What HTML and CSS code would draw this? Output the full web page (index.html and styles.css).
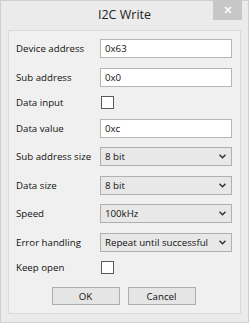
FILE: index.html
```html
<!DOCTYPE html>
<html>
<head>
<meta charset="utf-8">
<link rel="stylesheet" href="styles.css">
</head>
<body>
<div class="window">
  <div class="titlebar">
    <span class="title">I2C Write</span>
    <div class="close"><svg width="8" height="8" viewBox="0 0 8 8"><path d="M1 1L7 7M7 1L1 7" stroke="#fff" stroke-width="1.6"/></svg></div>
  </div>
  <div class="client">
    <div class="form">
      <label class="lbl">Device address</label><div class="field text">0x63</div>
      <label class="lbl">Sub address</label><div class="field text">0x0</div>
      <label class="lbl">Data input</label><div class="check"></div>
      <label class="lbl">Data value</label><div class="field text">0xc</div>
      <label class="lbl">Sub address size</label><div class="field select"><span>8 bit</span><svg class="chev" width="7" height="5" viewBox="0 0 7 5"><path d="M0.5 0.8L3.5 3.8L6.5 0.8" fill="none" stroke="#333" stroke-width="1.5"/></svg></div>
      <label class="lbl">Data size</label><div class="field select"><span>8 bit</span><svg class="chev" width="7" height="5" viewBox="0 0 7 5"><path d="M0.5 0.8L3.5 3.8L6.5 0.8" fill="none" stroke="#333" stroke-width="1.5"/></svg></div>
      <label class="lbl">Speed</label><div class="field select"><span>100kHz</span><svg class="chev" width="7" height="5" viewBox="0 0 7 5"><path d="M0.5 0.8L3.5 3.8L6.5 0.8" fill="none" stroke="#333" stroke-width="1.5"/></svg></div>
      <label class="lbl">Error handling</label><div class="field select"><span>Repeat until successful</span><svg class="chev" width="7" height="5" viewBox="0 0 7 5"><path d="M0.5 0.8L3.5 3.8L6.5 0.8" fill="none" stroke="#333" stroke-width="1.5"/></svg></div>
      <label class="lbl">Keep open</label><div class="check"></div>
    </div>
    <div class="buttons">
      <div class="btn">OK</div>
      <div class="btn">Cancel</div>
    </div>
  </div>
</div>
</body>
</html>
```
FILE: styles.css
```css
html, body {
  margin: 0;
  padding: 0;
  background: #ebebeb;
}
.window {
  width: 249px;
  height: 323px;
  box-sizing: border-box;
  border: 1px solid #cfcfcf;
  background: #ebebeb;
  display: flex;
  flex-direction: column;
  font-family: "Open Sans", "Noto Sans", sans-serif;
  color: #111;
}
.titlebar {
  height: 29px;
  position: relative;
  display: flex;
  justify-content: center;
  align-items: center;
}
.title {
  font-size: 12.5px;
  color: #222;
  margin-top: -2px;
}
.close {
  position: absolute;
  top: -1px;
  right: 6px;
  width: 29px;
  height: 20px;
  background: #c7c7c7;
  display: flex;
  align-items: center;
  justify-content: center;
}
.client {
  margin: 0 7px 8px 7px;
  flex: 1;
  border: 1px solid #dadada;
  background: #f0f0f0;
  display: flex;
  flex-direction: column;
  padding: 8px 8px 0 7px;
}
.form {
  display: grid;
  grid-template-columns: 84px 1fr;
  grid-template-rows: 19px 19px 13px 19px 19px 19px 19px 19px 13px;
  row-gap: 9.5px;
  align-items: center;
}
.lbl {
  font-size: 9.7px;
  line-height: 13px;
}
.field {
  height: 19px;
  box-sizing: border-box;
  font-size: 9.7px;
  display: flex;
  align-items: center;
  padding-left: 4px;
}
.text {
  background: #fff;
  border: 1px solid #b5b5b5;
}
.select {
  background: #e8e8e8;
  border: 1px solid #b0b0b0;
  justify-content: space-between;
  padding-right: 5px;
}
.check {
  width: 13px;
  height: 13px;
  box-sizing: border-box;
  border: 1px solid #5a5a5a;
  background: #fff;
  margin-left: 1px;
}
.buttons {
  display: flex;
  justify-content: center;
  gap: 8px;
  margin-top: 13px;
  padding-right: 1px;
}
.btn {
  width: 68px;
  height: 18px;
  box-sizing: border-box;
  border: 1px solid #adadad;
  background: #e5e5e5;
  font-size: 9.7px;
  display: flex;
  align-items: center;
  justify-content: center;
}
```
